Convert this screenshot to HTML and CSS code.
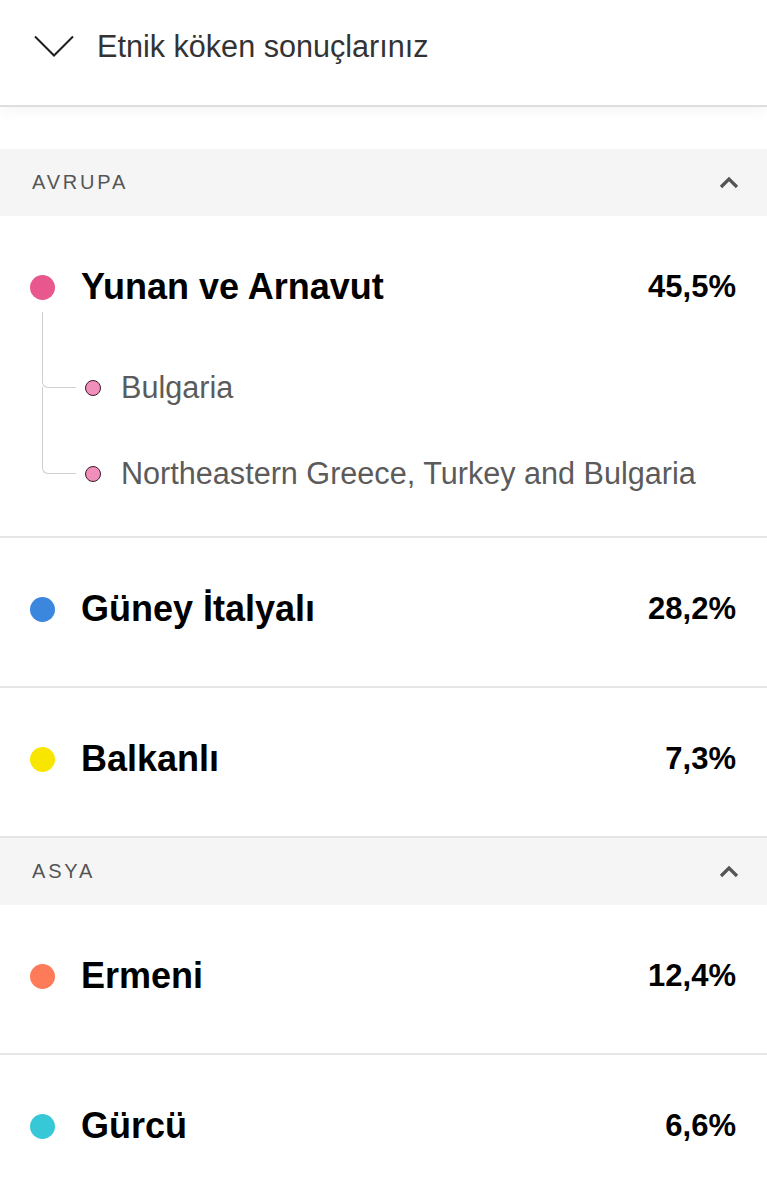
FILE: index.html
```html
<!DOCTYPE html>
<html lang="tr">
<head>
<meta charset="utf-8">
<title>Etnik köken sonuçlarınız</title>
<link rel="stylesheet" href="styles.css">
</head>
<body>
<header class="topbar">
  <svg class="chev-down" width="40" height="22" viewBox="0 0 40 22"><polyline points="1,1.5 20,20.5 39,1.5" fill="none" stroke="#1e1e1e" stroke-width="2"/></svg>
  <span class="topbar-title">Etnik köken sonuçlarınız</span>
</header>
<div class="spacer"></div>

<section class="region">
  <div class="region-head">
    <span class="region-name">AVRUPA</span>
    <svg class="caret" width="20" height="14" viewBox="0 0 20 14"><polyline points="2,12 10,4 18,12" fill="none" stroke="#555" stroke-width="3.2"/></svg>
  </div>

  <div class="row row-tree">
    <div class="main">
      <span class="dot pink"></span>
      <span class="name">Yunan ve Arnavut</span>
      <span class="pct">45,5%</span>
    </div>
    <ul class="subs">
      <li class="sub"><span class="subdot"></span><span class="subname">Bulgaria</span></li>
      <li class="sub"><span class="subdot"></span><span class="subname">Northeastern Greece, Turkey and Bulgaria</span></li>
    </ul>
  </div>

  <div class="row">
    <div class="main">
      <span class="dot blue"></span>
      <span class="name">Güney İtalyalı</span>
      <span class="pct">28,2%</span>
    </div>
  </div>

  <div class="row">
    <div class="main">
      <span class="dot yellow"></span>
      <span class="name">Balkanlı</span>
      <span class="pct">7,3%</span>
    </div>
  </div>
</section>

<section class="region">
  <div class="region-head">
    <span class="region-name">ASYA</span>
    <svg class="caret" width="20" height="14" viewBox="0 0 20 14"><polyline points="2,12 10,4 18,12" fill="none" stroke="#555" stroke-width="3.2"/></svg>
  </div>

  <div class="row">
    <div class="main">
      <span class="dot orange"></span>
      <span class="name">Ermeni</span>
      <span class="pct">12,4%</span>
    </div>
  </div>

  <div class="row last">
    <div class="main">
      <span class="dot cyan"></span>
      <span class="name">Gürcü</span>
      <span class="pct">6,6%</span>
    </div>
  </div>
</section>
</body>
</html>
```

FILE: styles.css
```css
* { box-sizing: border-box; }

body {
  margin: 0;
  background: #fff;
  font-family: "Liberation Sans", Arial, sans-serif;
  color: #000;
}

.topbar {
  height: 107px;
  display: flex;
  align-items: center;
  padding: 0 0 13px 34px;
  border-bottom: 2px solid #dedede;
  box-shadow: 0 5px 12px rgba(0, 0, 0, 0.04);
  position: relative;
}

.chev-down { flex: none; }

.topbar-title {
  margin-left: 23px;
  font-size: 30.6px;
  color: #333;
  line-height: 36px;
}

.spacer { height: 42px; }

.region-head {
  height: 67px;
  background: #f5f5f5;
  display: flex;
  align-items: center;
  justify-content: space-between;
  padding: 0 28px 0 32px;
}

.region-name {
  font-size: 20px;
  letter-spacing: 2.8px;
  color: #555;
}

.caret { flex: none; margin-top: -2px; }

.row {
  padding: 49px 31px 55px 30px;
  border-bottom: 2px solid #e6e6e6;
}

.row.last { border-bottom: none; }

.main {
  display: flex;
  align-items: center;
  height: 44px;
}

.dot {
  width: 25px;
  height: 25px;
  border-radius: 50%;
  flex: none;
  margin-right: 26px;
}

.pink { background: #e9578f; }
.blue { background: #3b87dd; }
.yellow { background: #f8e600; }
.orange { background: #fd7b58; }
.cyan { background: #37c8d8; }

.name {
  font-size: 36px;
  font-weight: bold;
  line-height: 44px;
}

.pct {
  margin-left: auto;
  font-size: 31px;
  font-weight: bold;
  line-height: 44px;
}

.row-tree { padding-bottom: 43px; }

.subs {
  list-style: none;
  margin: 0;
  padding: 58px 0 0 0;
  display: flex;
  flex-direction: column;
  gap: 46px;
}

.sub {
  position: relative;
  display: flex;
  align-items: center;
  height: 40px;
  padding-left: 55px;
}

.sub::before {
  content: "";
  position: absolute;
  left: 12px;
  top: -66px;
  width: 33px;
  height: 86px;
  border-left: 1.5px solid #cfcfcf;
  border-bottom: 1.5px solid #cfcfcf;
  border-bottom-left-radius: 6px;
}

.sub:first-child::before {
  top: -55px;
  height: 75px;
}

.subdot {
  width: 16px;
  height: 16px;
  border-radius: 50%;
  background: #f08fb9;
  border: 1.6px solid #3e1a2a;
  flex: none;
  margin-right: 20px;
  position: relative;
  top: 1px;
}

.subname {
  font-size: 30.6px;
  color: #5b5b5b;
  line-height: 40px;
}
```
